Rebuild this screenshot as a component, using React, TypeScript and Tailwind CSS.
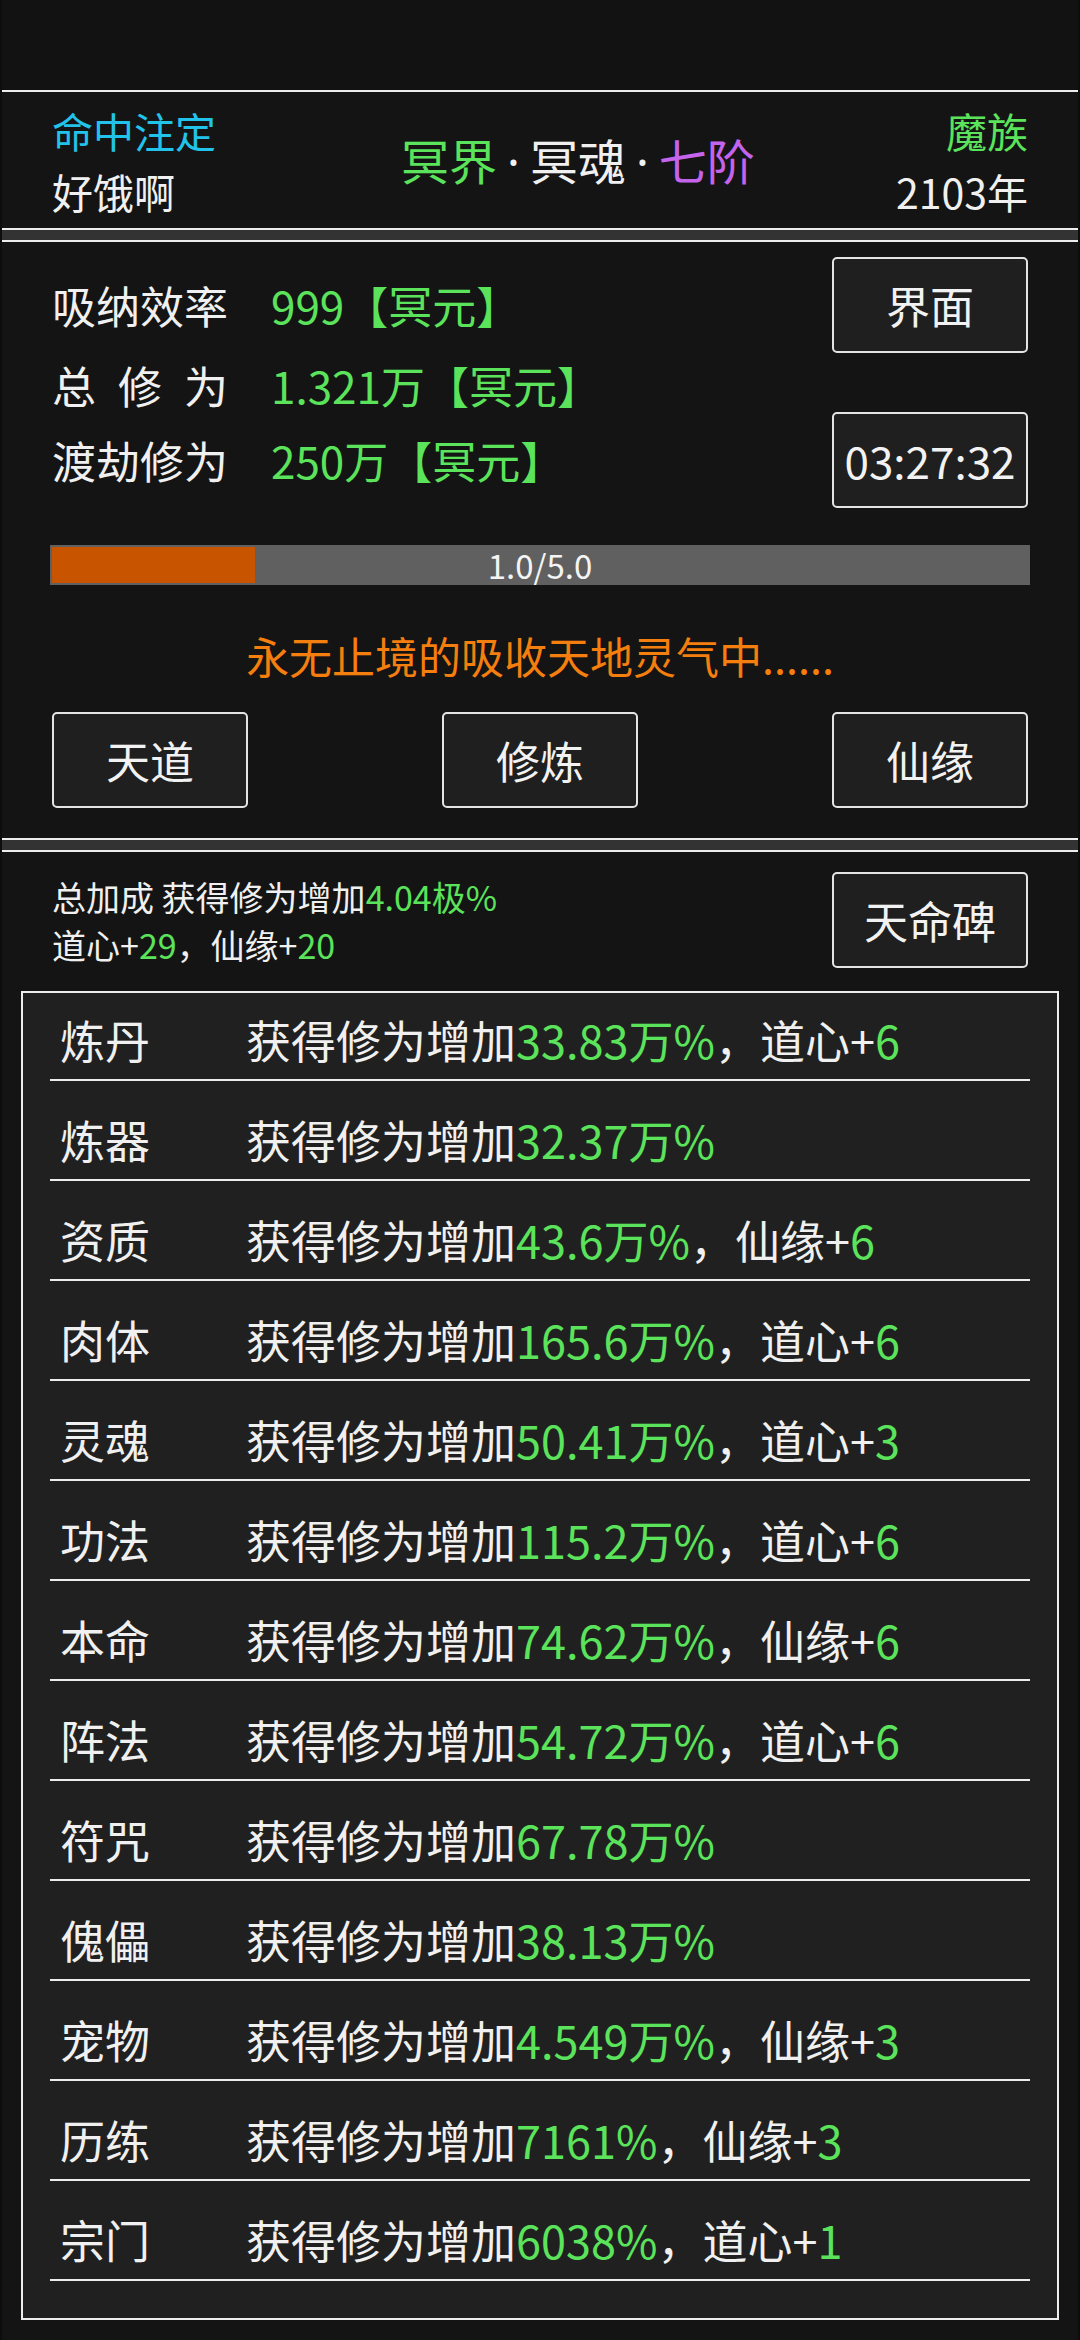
import React from "react";

const G = "text-[#5be35b]";

function Btn({ children, className = "" }: { children: React.ReactNode; className?: string }) {
  return (
    <div
      className={`w-[196px] h-[96px] flex items-center justify-center rounded-[5px] border-2 border-[#e4e4e4] bg-[#1f1f1f] text-[44px] leading-none text-[#f2f2f2] ${className}`}
    >
      {children}
    </div>
  );
}

function Dot() {
  return <span className="font-['Noto_Sans',sans-serif] mx-[10px]">·</span>;
}

const rows: { name: string; val: string; extra?: string; extraVal?: string }[] = [
  { name: "炼丹", val: "33.83万%", extra: "道心+", extraVal: "6" },
  { name: "炼器", val: "32.37万%" },
  { name: "资质", val: "43.6万%", extra: "仙缘+", extraVal: "6" },
  { name: "肉体", val: "165.6万%", extra: "道心+", extraVal: "6" },
  { name: "灵魂", val: "50.41万%", extra: "道心+", extraVal: "3" },
  { name: "功法", val: "115.2万%", extra: "道心+", extraVal: "6" },
  { name: "本命", val: "74.62万%", extra: "仙缘+", extraVal: "6" },
  { name: "阵法", val: "54.72万%", extra: "道心+", extraVal: "6" },
  { name: "符咒", val: "67.78万%" },
  { name: "傀儡", val: "38.13万%" },
  { name: "宠物", val: "4.549万%", extra: "仙缘+", extraVal: "3" },
  { name: "历练", val: "7161%", extra: "仙缘+", extraVal: "3" },
  { name: "宗门", val: "6038%", extra: "道心+", extraVal: "1" },
];

export default function App() {
  return (
    <div className="w-[1080px] h-[2340px] overflow-hidden bg-[#0d0d0d] px-[2px] font-['Noto_Sans_CJK_SC','Noto_Sans',sans-serif] text-[#f0f0f0]">
      {/* top bar */}
      <div className="h-[90px] bg-[#121212]" />

      {/* header panel */}
      <div className="h-[140px] border-y-2 border-[#ededed] bg-[#141414] flex px-[50px]">
        <div className="w-[349px] shrink-0 flex flex-col pt-[13px] gap-[11px] text-[41px] whitespace-nowrap">
          <div className="h-[50px] leading-[50px] text-[#22c3ea]">命中注定</div>
          <div className="h-[50px] leading-[50px]">好饿啊</div>
        </div>
        <div className="self-center text-[48px] leading-none whitespace-nowrap">
          <span className={G}>冥界</span>
          <Dot />
          <span>冥魂</span>
          <Dot />
          <span className="text-[#c463ec]">七阶</span>
        </div>
        <div className="ml-auto flex flex-col items-end pt-[13px] gap-[11px] text-[41px] whitespace-nowrap">
          <div className={`h-[50px] leading-[50px] ${G}`}>魔族</div>
          <div className="h-[50px] leading-[50px]">2103年</div>
        </div>
      </div>

      <div className="h-[10px] bg-[#333333]" />

      {/* stats panel */}
      <div className="h-[600px] border-y-2 border-[#ededed] bg-[#141414] px-[50px] pt-[15px]">
        <div className="flex">
          <div className="flex flex-col pt-[23px] text-[44px] whitespace-nowrap">
            <div className="h-[50px] leading-[50px] flex">
              <span className="w-[176px] shrink-0">吸纳效率</span>
              <span className={`ml-[43px] ${G}`}>999【冥元】</span>
            </div>
            <div className="h-[50px] leading-[50px] flex mt-[30px]">
              <span className="w-[176px] shrink-0 flex justify-between">
                <span>总</span>
                <span>修</span>
                <span>为</span>
              </span>
              <span className={`ml-[43px] ${G}`}>1.321万【冥元】</span>
            </div>
            <div className="h-[50px] leading-[50px] flex mt-[25px]">
              <span className="w-[176px] shrink-0">渡劫修为</span>
              <span className={`ml-[43px] ${G}`}>250万【冥元】</span>
            </div>
          </div>
          <div className="ml-auto flex flex-col gap-[59px]">
            <Btn>界面</Btn>
            <Btn>03:27:32</Btn>
          </div>
        </div>

        {/* progress bar */}
        <div className="mt-[37px] -mx-[2px] h-[40px] bg-[#606060] relative p-[2px]">
          <div className="h-full w-[20.8%] bg-[#c95400]" />
          <div className="absolute inset-0 flex items-center justify-center text-[33px] leading-none text-[#f4f4f4]">
            1.0/5.0
          </div>
        </div>

        <div className="mt-[45px] h-[50px] leading-[50px] text-center text-[43px] text-[#f47e0e] whitespace-nowrap">
          永无止境的吸收天地灵气中......
        </div>

        <div className="mt-[32px] flex justify-between">
          <Btn>天道</Btn>
          <Btn>修炼</Btn>
          <Btn>仙缘</Btn>
        </div>
      </div>

      <div className="h-[10px] bg-[#333333]" />

      {/* bonus panel */}
      <div className="border-t-2 border-[#ededed] bg-[#141414] pt-[20px] h-[1490px]">
        <div className="flex px-[50px]">
          <div className="flex flex-col pt-[5px] gap-[8px] text-[34px]">
            <div className="h-[40px] leading-[40px] whitespace-nowrap">
              总加成 获得修为增加<span className={G}>4.04极%</span>
            </div>
            <div className="h-[40px] leading-[40px] whitespace-nowrap">
              道心+<span className={G}>29</span>，仙缘+<span className={G}>20</span>
            </div>
          </div>
          <div className="ml-auto">
            <Btn>天命碑</Btn>
          </div>
        </div>

        <div className="mt-[23px] mx-[19px] border-2 border-[#ededed] bg-[#202020] px-[27px] pb-[37px]">
          {rows.map((r, i) => (
            <div
              key={r.name}
              className={`${i === 0 ? "h-[88px]" : "h-[100px]"} flex items-end border-b-2 border-[#ededed] pb-[14px] text-[45px]`}
            >
              <div className="h-[50px] leading-[50px] flex whitespace-nowrap">
                <span className="w-[196px] shrink-0 pl-[10px]">{r.name}</span>
                <span>
                  获得修为增加<span className={G}>{r.val}</span>
                  {r.extra && (
                    <>
                      ，{r.extra}
                      <span className={G}>{r.extraVal}</span>
                    </>
                  )}
                </span>
              </div>
            </div>
          ))}
        </div>
      </div>
    </div>
  );
}
